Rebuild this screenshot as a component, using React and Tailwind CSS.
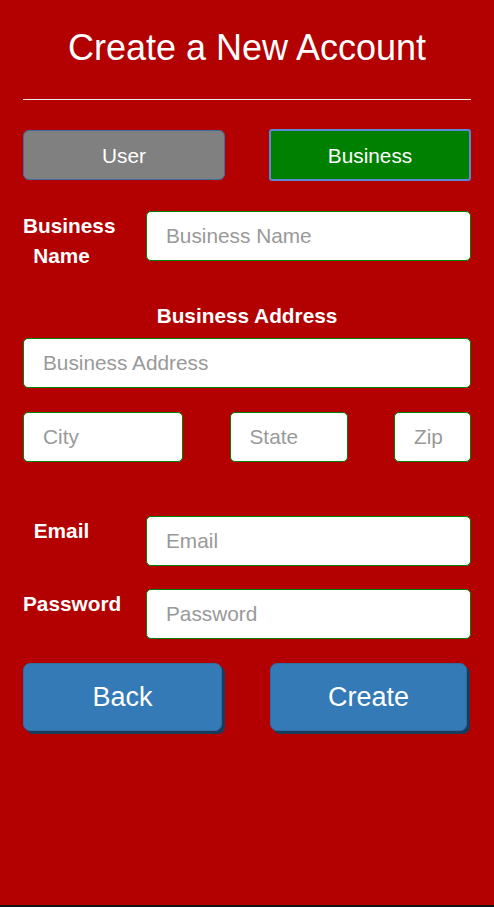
import React, { useState } from "react";

function Field({ placeholder, className = "" }) {
  return (
    <input
      type="text"
      placeholder={placeholder}
      className={`h-[50px] rounded-[5px] border border-[#008000] bg-white pl-[19px] text-[20.8px] text-[#333] placeholder:text-[#999] outline-none ${className}`}
    />
  );
}

function Label({ children }) {
  return (
    <div className="w-[77px] shrink-0 text-center text-[20.8px] font-bold leading-[30px] text-white">
      {children}
    </div>
  );
}

export default function App() {
  const [type, setType] = useState("business");

  return (
    <div className="font-['Liberation_Sans',Arial,sans-serif]">
      <div className="h-[905px] bg-[#b30000] px-[23px] pt-[28px]">
        {/* Title */}
        <h1 className="text-center text-[36px] leading-[40px] text-white">
          Create a New Account
        </h1>
        <div className="mt-[31px] h-px bg-[#eee]" />

        {/* Account type toggle */}
        <div className="mt-[30px] flex justify-between">
          <button
            onClick={() => setType("user")}
            className="h-[50px] w-[202px] rounded-[6px] border border-[#3a6ea5] bg-[#808080] pt-px text-[20.8px] text-white"
          >
            User
          </button>
          <button
            onClick={() => setType("business")}
            className="-mt-px h-[52px] w-[202px] rounded-[3px] border-2 border-[#5a87d8] bg-[#008000] pt-px text-[20.8px] text-white"
          >
            Business
          </button>
        </div>

        {/* Business name */}
        <div className="mt-[30px] flex gap-[46px]">
          <Label>Business Name</Label>
          <Field placeholder="Business Name" className="flex-1" />
        </div>

        {/* Address */}
        <div className="mt-[30px] text-center text-[20.8px] font-bold leading-[30px] text-white">
          Business Address
        </div>
        <Field placeholder="Business Address" className="mt-[7px] w-full" />
        <div className="mt-[24px] flex justify-between">
          <Field placeholder="City" className="w-[160px]" />
          <Field placeholder="State" className="w-[118px]" />
          <Field placeholder="Zip" className="w-[77px]" />
        </div>

        {/* Credentials */}
        <div className="mt-[54px] flex gap-[46px]">
          <Label>Email</Label>
          <Field placeholder="Email" className="flex-1" />
        </div>
        <div className="mt-[23px] flex gap-[46px]">
          <Label>Password</Label>
          <Field placeholder="Password" className="flex-1" />
        </div>

        {/* Actions */}
        <div className="mt-[24px] flex justify-between">
          <button className="h-[68px] w-[199px] rounded-[7px] border border-[#2e6da4] bg-[#337ab7] text-[27px] text-white shadow-[3px_3px_0_#1a3c5c]">
            Back
          </button>
          <button className="mr-[4px] h-[68px] w-[197px] rounded-[7px] border border-[#2e6da4] bg-[#337ab7] text-[27px] text-white shadow-[3px_3px_0_#1a3c5c]">
            Create
          </button>
        </div>
      </div>
      <div className="h-[2px] bg-[#15150f]" />
    </div>
  );
}
